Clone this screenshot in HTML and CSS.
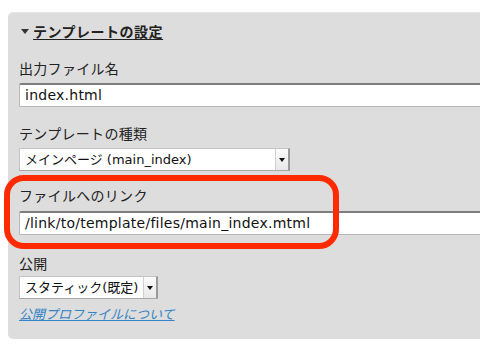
FILE: index.html
```html
<!DOCTYPE html>
<html lang="ja">
<head>
<meta charset="utf-8">
<link rel="stylesheet" href="styles.css">
</head>
<body>
<div class="panel">
  <div class="header">
    <span class="tri"></span>
    <span class="title">テンプレートの設定</span>
  </div>
  <div class="label l1">出力ファイル名</div>
  <div class="field f1">index.html</div>
  <div class="label l2">テンプレートの種類</div>
  <div class="select s1">
    <span class="sel-text">メインページ (main_index)</span>
    <span class="sel-btn"><span class="arrow"></span></span>
  </div>
  <div class="label l3">ファイルへのリンク</div>
  <div class="field f2">/link/to/template/files/main_index.mtml</div>
  <div class="label l4">公開</div>
  <div class="select s2">
    <span class="sel-text">スタティック(既定)</span>
    <span class="sel-btn"><span class="arrow"></span></span>
  </div>
  <a class="link" href="#">公開プロファイルについて</a>
</div>
<div class="highlight"></div>
</body>
</html>
```

FILE: styles.css
```css
html, body {
  margin: 0;
  padding: 0;
  background: #ffffff;
  overflow: hidden;
  width: 480px;
  height: 346px;
}
body {
  position: relative;
  font-family: "DejaVu Sans", "Noto Sans CJK JP", sans-serif;
  color: #222;
}
.panel {
  margin: 12px 0 0 8px;
  width: 472px;
  box-sizing: border-box;
  padding: 8px 0 16px 11px;
  background: #dcdddc;
  border-top: 1px solid #e6e7e6;
  border-radius: 5px 0 0 5px;
  display: flex;
  flex-direction: column;
  align-items: flex-start;
}
.header {
  height: 20px;
  display: flex;
  align-items: center;
  gap: 4px;
  margin-left: 2px;
}
.tri {
  width: 0;
  height: 0;
  border-left: 4px solid transparent;
  border-right: 4px solid transparent;
  border-top: 5px solid #333;
  margin-top: 1px;
}
.title {
  font-family: "Noto Sans CJK JP", sans-serif;
  font-weight: bold;
  font-size: 14px;
  line-height: 20px;
  color: #222;
  letter-spacing: 0.5px;
  text-decoration: underline;
  text-underline-offset: 2px;
  text-decoration-thickness: 1px;
}
.label {
  font-family: "Noto Sans CJK JP", sans-serif;
  font-size: 14px;
  line-height: 20px;
  color: #222;
  letter-spacing: 0.3px;
}
.l1 { margin-top: 17px; }
.l2 { margin-top: 16px; }
.l3 { margin-top: 14px; }
.l4 { margin-top: 18px; }
.field {
  box-sizing: border-box;
  align-self: stretch;
  height: 24px;
  background: #fff;
  border: 1px solid #b8b8b8;
  border-right: none;
  border-top: 2px solid #7d7d7d;
  border-radius: 2px 0 0 2px;
  padding: 0 0 0 5px;
  font-size: 14px;
  letter-spacing: 0.25px;
  line-height: 21px;
  color: #111;
  white-space: nowrap;
  overflow: hidden;
}
.f1 { margin-top: 5px; }
.f2 { margin-top: 6px; }
.select {
  box-sizing: border-box;
  height: 23px;
  background: #fff;
  border: 1px solid #c4c4c4;
  border-right: 2px solid #9a9a9a;
  border-bottom: 1px solid #a8a8a8;
  display: flex;
  align-items: stretch;
  color: #111;
}
.s1 { margin-top: 5px; width: 271px; }
.s2 { margin-top: 3px; width: 139px; }
.sel-text {
  flex: 1;
  padding-left: 5px;
  font-size: 13px;
  line-height: 21px;
  white-space: nowrap;
  font-family: "DejaVu Sans", "Noto Sans CJK JP", sans-serif;
}
.sel-btn {
  width: 12px;
  border-left: 1px solid #d0d0d0;
  background: linear-gradient(#fbfbfb, #e8e8e8);
  display: flex;
  align-items: center;
  justify-content: center;
}
.arrow {
  width: 0;
  height: 0;
  border-left: 3px solid transparent;
  border-right: 3px solid transparent;
  border-top: 4px solid #111;
  margin-top: 1px;
}
.link {
  margin-top: 6px;
  font-family: "Noto Sans CJK JP", sans-serif;
  font-size: 13px;
  line-height: 18px;
  font-style: italic;
  color: #3584c6;
  text-decoration: underline;
}
.highlight {
  position: absolute;
  left: 4px;
  top: 175px;
  width: 335px;
  height: 74px;
  box-sizing: border-box;
  border: 6px solid #ff2a00;
  border-radius: 20px;
}
```
